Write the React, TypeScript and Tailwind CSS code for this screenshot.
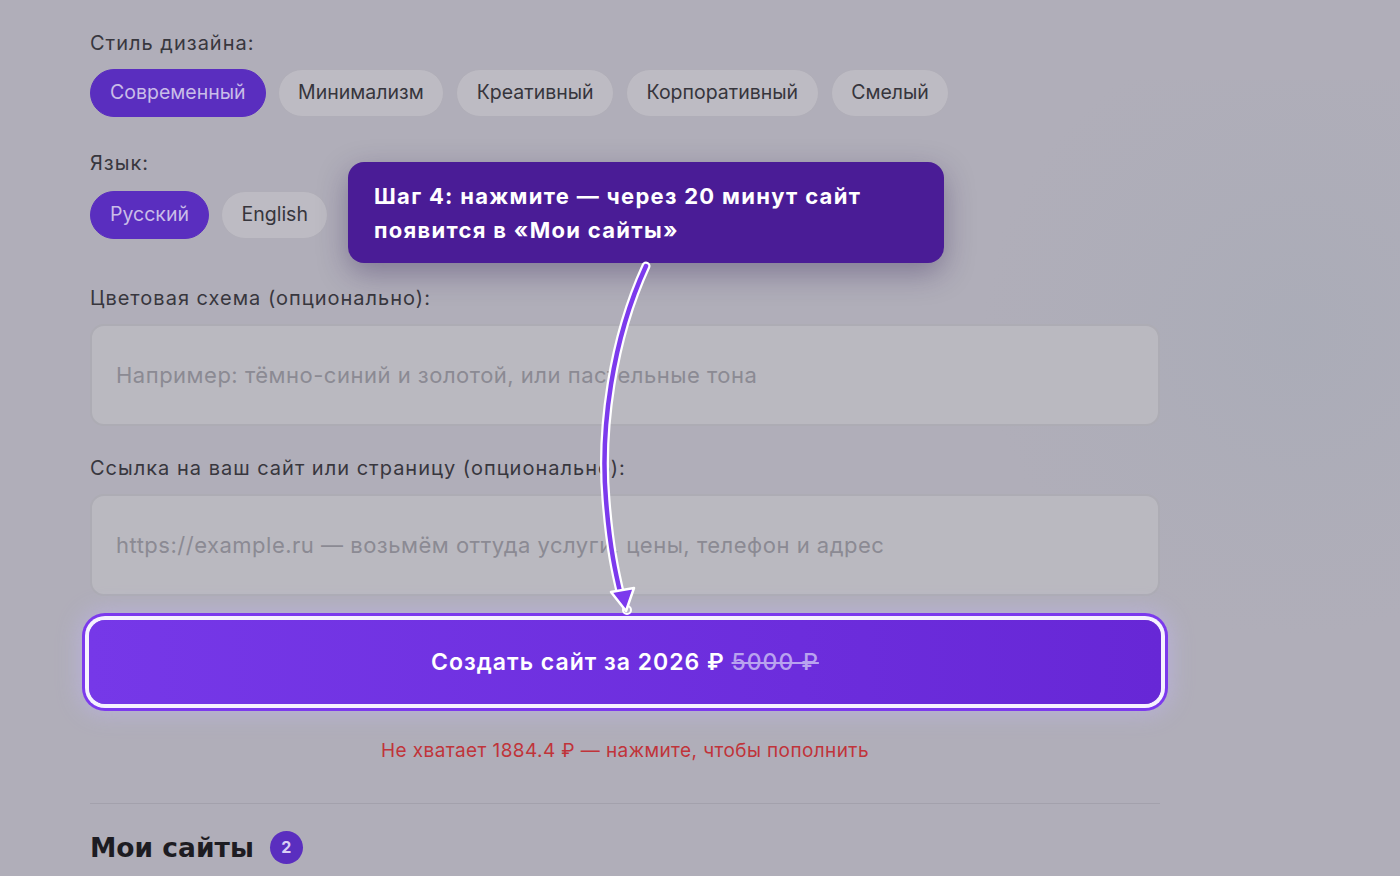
import { useState } from 'react'

const styles = ['Современный', 'Минимализм', 'Креативный', 'Корпоративный', 'Смелый']
const langs = ['Русский', 'English']

function Chip({ label, active, onClick }: { label: string; active: boolean; onClick: () => void }) {
  return (
    <button
      onClick={onClick}
      className={
        active
          ? 'h-12 px-[19px] rounded-full bg-[#5a2ebf] text-[#c9bde8] text-[19.5px] border border-[#5a2ebf]'
          : 'h-12 px-[19.5px] rounded-full bg-[#bdbbc3] text-[#36353c] text-[19.5px] border border-[#b0aeb8]'
      }
    >
      {label}
    </button>
  )
}

function Arrow() {
  const d = 'M646 266 C 612 340, 600 430, 606 500 C 610 550, 616 575, 621 596'
  return (
    <svg className="absolute inset-0 pointer-events-none" width="1400" height="876" viewBox="0 0 1400 876">
      <path d={d} fill="none" stroke="#ffffff" strokeWidth="9" strokeLinecap="round" />
      <path d={d} fill="none" stroke="#7c3aed" strokeWidth="4.5" strokeLinecap="round" />
      <circle cx="627" cy="610" r="4" fill="none" stroke="#ffffff" strokeWidth="2" />
      <path d="M611 592 L634 588 L626 611 Z" fill="#7c3aed" stroke="#ffffff" strokeWidth="2.5" strokeLinejoin="round" />
    </svg>
  )
}

export default function App() {
  const [style, setStyle] = useState('Современный')
  const [lang, setLang] = useState('Русский')

  return (
    <div
      className="relative w-[1400px] h-[876px] overflow-hidden bg-[#b0aeb9] text-[#38373e]"
      style={{ fontFamily: 'Inter, "Noto Sans", sans-serif' }}
    >
      <div className="absolute right-0 top-[80px] w-[420px] h-[560px] bg-[radial-gradient(ellipse_at_75%_45%,rgba(165,170,182,0.5),rgba(176,174,185,0)_70%)]" />

      <div className="relative w-[1070px] ml-[90px] pt-[29px]">
        <div className="text-[20px] leading-[28px] tracking-[1px]">Стиль дизайна:</div>
        <div className="mt-[12px] flex gap-[12px]">
          {styles.map((s) => (
            <Chip key={s} label={s} active={s === style} onClick={() => setStyle(s)} />
          ))}
        </div>

        <div className="mt-[32px] text-[20px] leading-[28px] tracking-[1px]">Язык:</div>
        <div className="mt-[14px] flex gap-[12px]">
          {langs.map((l) => (
            <Chip key={l} label={l} active={l === lang} onClick={() => setLang(l)} />
          ))}
        </div>

        <div className="mt-[45px] text-[20px] leading-[28px] tracking-[1px]">Цветовая схема (опционально):</div>
        <input
          className="mt-[12px] w-full h-[102px] rounded-[14px] bg-[#bab9c0] border-2 border-[#adacb4] px-[24px] text-[22px] tracking-[0.5px] text-[#36353c] placeholder:text-[#8b8a93] outline-none"
          placeholder="Например: тёмно-синий и золотой, или пастельные тона"
        />

        <div className="mt-[28px] text-[20px] leading-[28px] tracking-[1px]">Ссылка на ваш сайт или страницу (опционально):</div>
        <input
          className="mt-[12px] w-full h-[102px] rounded-[14px] bg-[#bab9c0] border-2 border-[#adacb4] px-[24px] text-[22px] tracking-[0.5px] text-[#36353c] placeholder:text-[#8b8a93] outline-none"
          placeholder="https://example.ru — возьмём оттуда услуги, цены, телефон и адрес"
        />

        <button className="mt-[24px] w-[1072px] h-[84px] -ml-px rounded-[16px] bg-gradient-to-r from-[#7638e8] to-[#6727d6] text-white text-[23px] tracking-[1px] font-semibold shadow-[0_0_0_4px_#f6f2ff,0_0_0_7px_#7c3aed,0_0_22px_10px_rgba(196,181,253,0.45)]">
          Создать сайт за 2026 ₽ <span className="text-[#b9a3ef] line-through font-medium">5000 ₽</span>
        </button>

        <div className="mt-[33px] text-center text-[19px] tracking-[0.4px] text-[#c0343a]">Не хватает 1884.4 ₽ — нажмите, чтобы пополнить</div>

        <div className="mt-[37px] h-px bg-[#a3a1ac]" />

        <div className="mt-[24px] flex items-center gap-[16px]">
          <h2 className="text-[26.5px] font-bold text-[#1d1c22]" style={{ fontFamily: '"DejaVu Sans", sans-serif' }}>
            Мои сайты
          </h2>
          <span className="w-[33px] h-[33px] rounded-full bg-[#5a2ebf] text-[#d9cff5] text-[16px] font-bold flex items-center justify-center">
            2
          </span>
        </div>
      </div>

      <div className="absolute left-[348px] top-[162px] w-[596px] h-[101px] rounded-[16px] bg-[#4a1c96] px-[26px] pt-[17px] text-white text-[22px] tracking-[1.3px] font-bold leading-[34px] shadow-[0_10px_30px_rgba(40,20,80,0.35)]">
        Шаг 4: нажмите — через 20 минут сайт
        <br />
        появится в «Мои сайты»
      </div>

      <Arrow />
    </div>
  )
}
